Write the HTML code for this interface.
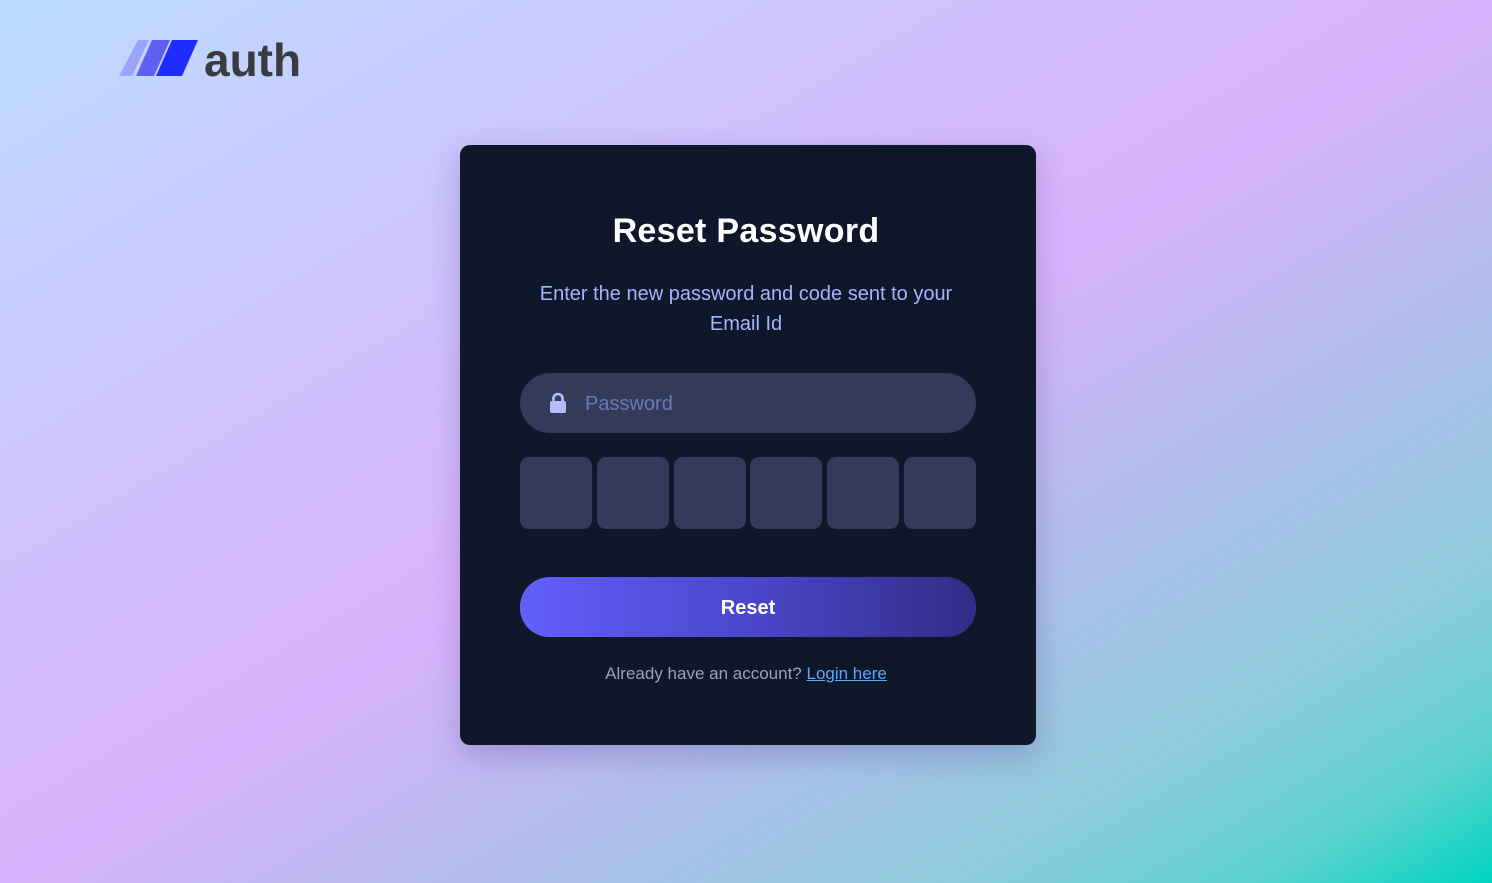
<!DOCTYPE html>
<html><head><meta charset="utf-8"><style>
html,body{margin:0;padding:0;width:1492px;height:883px;overflow:hidden}
body{background:linear-gradient(to bottom right,#bcdcff 0%,#cfc3fd 30%,#d8b2fc 50%,#b2bdec 66%,#8ecbdc 82%,#5cd2cf 92%,#00d4c0 100%);font-family:"Liberation Sans",sans-serif;position:relative}
.logo{position:absolute;left:119px;top:40px}
.auth{position:absolute;left:204px;top:33px;font-size:46px;font-weight:bold;color:#3b3b3f}
.card{position:absolute;left:460px;top:145px;width:576px;height:600px;background:#0f172a;border-radius:10px;box-shadow:0 10px 30px rgba(60,40,120,.25)}
h1{position:absolute;left:0;right:0;top:212px;margin:0;text-align:center;color:#fff;font-size:34px;font-weight:bold;letter-spacing:0.3px}
.sub{position:absolute;left:0;right:0;top:279px;text-align:center;color:#a5b4fc;font-size:20px;line-height:30px}
.inp{position:absolute;left:520px;top:373px;width:456px;height:60px;border-radius:30px;background:#343a5a}
.inp span{position:absolute;left:65px;top:20px;font-size:20px;color:#6c78b8}
.codes{position:absolute;left:520px;top:457px;width:456px;display:flex;justify-content:space-between}
.codes div{width:72px;height:72px;border-radius:9px;background:#343a5a}
.btn{position:absolute;left:520px;top:579px;width:456px;height:58px;border-radius:30px;background:linear-gradient(to right,#6160fb,#4a47cc 50%,#322c86);color:#fff;font-weight:bold;font-size:20px;text-align:center;line-height:58px}
.btn2{position:absolute;left:520px;top:577px;width:456px;height:60px;border-radius:30px;background:linear-gradient(to right,#6160fb,#4a47cc 50%,#322c86)}
.foot{position:absolute;left:0;right:0;top:664px;text-align:center;font-size:17px;color:#9aa3b5}
.foot a{color:#60a5fa;text-decoration:underline}
</style></head><body>
<svg class="logo" width="80" height="37" viewBox="0 0 80 37">
<polygon points="19,0 30,0 13,36 0,36" fill="#9ca3fc"/>
<polygon points="33,0 51,0 35,36 17,36" fill="#5f5ff6"/>
<polygon points="53,0 79,0 63,36 37,36" fill="#1e2cff"/>
</svg>
<div class="auth">auth</div>
<div class="card"></div>
<h1>Reset Password</h1>
<div class="sub">Enter the new password and code sent to your<br>Email Id</div>
<div class="inp">
<svg style="position:absolute;left:29px;top:19px" width="18" height="22" viewBox="0 0 18 22"><path d="M4.5 10V6.5a4.5 4.5 0 0 1 9 0V10" fill="none" stroke="#b4bcff" stroke-width="2.6"/><rect x="1" y="9" width="16" height="12" rx="2" fill="#b4bcff"/></svg>
<span>Password</span></div>
<div class="codes"><div></div><div></div><div></div><div></div><div></div><div></div></div>
<div class="btn2"></div>
<div class="btn">Reset</div>
<div class="foot">Already have an account? <a>Login here</a></div>
</body></html>
